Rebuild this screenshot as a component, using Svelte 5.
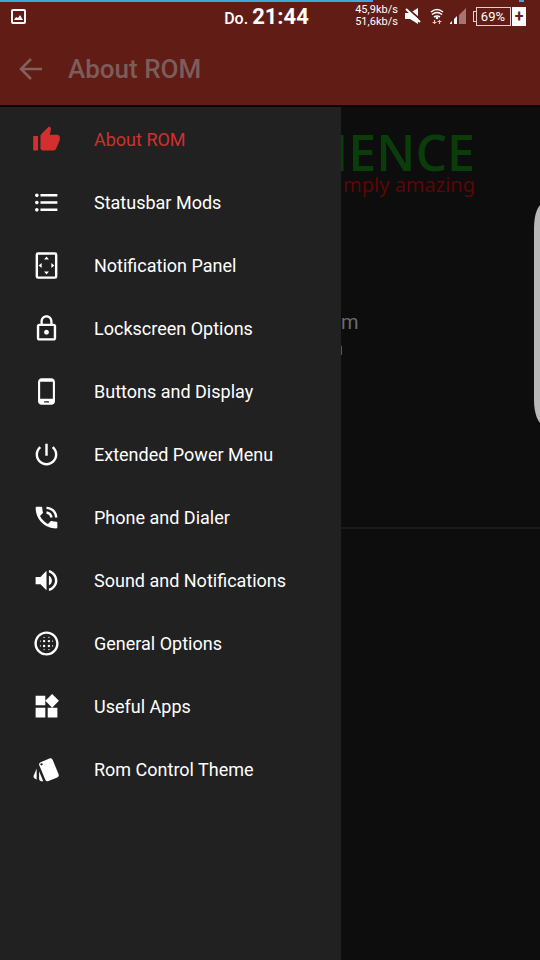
<script>
  let active = $state('about');

  // drawer entries, icons are drawn on a 24x24 grid
  const items = [
    { id: 'about', label: 'About ROM', icon: 'M1 21h4V9H1v12zm22-11c0-1.1-.9-2-2-2h-6.31l.95-4.57.03-.32c0-.41-.17-.79-.44-1.06L14.17 1 7.59 7.59C7.22 7.95 7 8.45 7 9v10c0 1.1.9 2 2 2h9c.83 0 1.54-.5 1.84-1.22l3.02-7.05c.09-.23.14-.47.14-.73v-2z' },
    { id: 'statusbar', label: 'Statusbar Mods', icon: 'M4 10.5c-.83 0-1.5.67-1.5 1.5s.67 1.5 1.5 1.5 1.5-.67 1.5-1.5-.67-1.5-1.5-1.5zm0-6c-.83 0-1.5.67-1.5 1.5S3.17 7.5 4 7.5 5.5 6.83 5.5 6 4.83 4.5 4 4.5zm0 12c-.83 0-1.5.68-1.5 1.5s.68 1.5 1.5 1.5 1.5-.68 1.5-1.5-.67-1.5-1.5-1.5zM7 19h14v-2H7v2zm0-6h14v-2H7v2zm0-8v2h14V5H7z' },
    { id: 'panel', label: 'Notification Panel', icon: 'M12 4.5 14 7h-4zM12 19.5 10 17h4zM5.5 12 8 10v4zM18.5 12 16 14v-4zM19 1H5a2 2 0 0 0-2 2v18a2 2 0 0 0 2 2h14a2 2 0 0 0 2-2V3a2 2 0 0 0-2-2zm0 20H5V3h14v18z' },
    { id: 'lockscreen', label: 'Lockscreen Options', icon: 'M12 17c1.1 0 2-.9 2-2s-.9-2-2-2-2 .9-2 2 .9 2 2 2zm6-9h-1V6c0-2.76-2.24-5-5-5S7 3.24 7 6v2H6c-1.1 0-2 .9-2 2v10c0 1.1.9 2 2 2h12c1.1 0 2-.9 2-2V10c0-1.1-.9-2-2-2zM8.9 6c0-1.71 1.39-3.1 3.1-3.1s3.1 1.39 3.1 3.1v2H8.9V6zM18 20H6V10h12v10z' },
    { id: 'display', label: 'Buttons and Display', icon: 'M16 1H8C6.34 1 5 2.34 5 4v16c0 1.66 1.34 3 3 3h8c1.66 0 3-1.34 3-3V4c0-1.66-1.34-3-3-3zm-2 20h-4v-1h4v1zm3.25-3H6.75V4h10.5v14z' },
    { id: 'power', label: 'Extended Power Menu', icon: 'M13 3h-2v10h2V3zm4.83 2.17l-1.42 1.42C17.99 7.86 19 9.81 19 12c0 3.87-3.13 7-7 7s-7-3.13-7-7c0-2.19 1.01-4.14 2.58-5.42L6.17 5.17C4.23 6.82 3 9.26 3 12c0 4.97 4.03 9 9 9s9-4.03 9-9c0-2.74-1.23-5.18-3.17-6.83z' },
    { id: 'phone', label: 'Phone and Dialer', icon: 'M20 15.5c-1.25 0-2.45-.2-3.57-.57-.35-.11-.74-.03-1.02.24l-2.2 2.2c-2.83-1.44-5.15-3.75-6.59-6.59l2.2-2.21c.28-.26.36-.65.25-1C8.7 6.45 8.5 5.25 8.5 4c0-.55-.45-1-1-1H4c-.55 0-1 .45-1 1 0 9.39 7.61 17 17 17 .55 0 1-.45 1-1v-3.5c0-.55-.45-1-1-1zM19 12h2c0-4.97-4.03-9-9-9v2c3.87 0 7 3.13 7 7zm-4 0h2c0-2.76-2.24-5-5-5v2c1.66 0 3 1.34 3 3z' },
    { id: 'sound', label: 'Sound and Notifications', icon: 'M3 9v6h4l5 5V4L7 9H3zm13.5 3c0-1.77-1.02-3.29-2.5-4.03v8.05c1.48-.73 2.5-2.25 2.5-4.02zM14 3.23v2.06c2.89.86 5 3.54 5 6.71s-2.11 5.85-5 6.71v2.06c4.01-.91 7-4.49 7-8.77s-2.99-7.86-7-8.77z' },
    { id: 'general', label: 'General Options', icon: 'M12 2C6.48 2 2 6.48 2 12s4.48 10 10 10 10-4.48 10-10S17.52 2 12 2zm0 18c-4.42 0-8-3.58-8-8s3.58-8 8-8 8 3.58 8 8-3.58 8-8 8z' },
    { id: 'apps', label: 'Useful Apps', icon: 'M13 13v8h8v-8h-8zM3 21h8v-8H3v8zM3 3v8h8V3H3zm13.66-1.31L11 7.34 16.66 13l5.66-5.66-5.66-5.65z' },
    { id: 'theme', label: 'Rom Control Theme', icon: 'M2.53 19.65l1.34.56v-9.03l-2.43 5.86c-.41 1.02.08 2.19 1.09 2.61zm19.5-3.7L17.07 3.98c-.31-.75-1.04-1.21-1.81-1.23-.26 0-.53.04-.79.15L7.1 5.95c-.75.31-1.21 1.03-1.23 1.8-.01.27.04.54.15.8l4.96 11.97c.31.76 1.05 1.22 1.83 1.23.26 0 .52-.05.77-.15l7.36-3.05c1.02-.42 1.51-1.59 1.09-2.6zM7.88 8.75c-.55 0-1-.45-1-1s.45-1 1-1 1 .45 1 1-.45 1-1 1zm-2 11c0 1.1.9 2 2 2h1.45l-3.45-8.34v6.34z' }
  ];

  // dot pattern of the General Options icon: [x, y, r]
  const dots = [
    [10, 10, 1], [14, 10, 1], [10, 14, 1], [14, 14, 1],
    [7, 10, 0.5], [7, 14, 0.5], [17, 10, 0.5], [17, 14, 0.5],
    [10, 7, 0.5], [14, 7, 0.5], [10, 17, 0.5], [14, 17, 0.5]
  ];
</script>

<div class="screen">
  <header>
    <div class="traffic-line"></div>
    <div class="traffic-dot"></div>
    <div class="status-bar">
      <div class="status-left">
        <svg width="15" height="15" viewBox="0 0 15 15" fill="none">
          <rect x="1" y="1" width="13" height="13" rx="1" stroke="#fff" stroke-width="2" />
          <path d="M3 11l2-3 2 1 2-3 3 5z" fill="#fff" />
        </svg>
      </div>
      <div class="clock"><span class="day">Do.</span> <span class="time">21:44</span></div>
      <div class="status-right">
        <div class="speed">
          <span>45,9kb/s</span>
          <span>51,6kb/s</span>
        </div>
        <svg class="mute" width="16" height="16" viewBox="0 0 16 16">
          <path d="M0 5h5l8-5v16l-8-5H0z" fill="#fff" />
          <path d="M2 0l14 12" stroke="#611c16" stroke-width="2" />
          <path d="M1 1l14 13" stroke="#fff" stroke-width="2" />
        </svg>
        <svg class="wifi" width="14" height="17" viewBox="0 0 14 17" fill="none" stroke="#fff" stroke-width="1.6">
          <path d="M1 4q6-5 12 0M2 6.5q5-4 10 0M4 9q3-2 6 0" />
          <circle cx="7" cy="10" r="1.3" fill="#fff" stroke="none" />
          <path d="M4.5 12v4M9.5 12v4M2.5 14.500h4M7.500 13.500h4" stroke="#f0c4bf" stroke-width="1.2" />
        </svg>
        <svg class="signal" width="16" height="16" viewBox="0 0 16 16">
          <path d="M9 7l2-2v11H9zM11 5l5-5v16h-5z" fill="#a67571" />
          <path d="M0 16v-1l2-2v3zM4 16v-5l3-3v8z" fill="#fff" />
        </svg>
        <div class="battery">
          <span class="tip"></span>
          <span class="level">69%</span>
          <span class="plus">+</span>
        </div>
      </div>
    </div>
    <div class="toolbar">
      <button class="back" aria-label="Back">
        <svg width="24" height="22" viewBox="0 0 24 22" fill="none" stroke="#85615e" stroke-width="2.5">
          <path d="M12 1L2 11l10 10M2 11h21" />
        </svg>
      </button>
      <h1>About ROM</h1>
    </div>
  </header>

  <div class="body">
    <nav>
      {#each items as item}
        <a href="#{item.id}" class:active={active === item.id} onclick={() => (active = item.id)}>
          <svg width="29" height="29" viewBox="0 0 24 24" fill="currentColor">
            <path d={item.icon} />
            {#if item.id === 'general'}
              {#each dots as [x, y, r]}
                <circle cx={x} cy={y} {r} />
              {/each}
            {/if}
          </svg>
          <span>{item.label}</span>
        </a>
      {/each}
    </nav>

    <main>
      <div class="logo">
        <div class="brand">IENCE</div>
        <div class="slogan">mply amazing</div>
      </div>
      <div class="info">
        <p>m</p>
        <p class="small">n</p>
      </div>
    </main>
  </div>

  <div class="edge-panel"></div>
</div>

<style>
  :global(body) {
    margin: 0;
    background: #0d0d0d;
  }
  .screen {
    position: relative;
    display: flex;
    flex-direction: column;
    min-height: 100vh;
    overflow: hidden;
    font-family: Roboto, sans-serif;
    color: #fff;
  }
  header {
    position: relative;
    height: 105px;
    background: #611c16;
    border-bottom: 2px solid #090505;
  }
  .traffic-line,
  .traffic-dot {
    position: absolute;
    top: 0;
    height: 2px;
    background: #42a5dc;
  }
  .traffic-line {
    left: 0;
    width: 69%;
  }
  .traffic-dot {
    right: 16px;
    width: 5px;
  }
  .status-bar {
    display: grid;
    grid-template-columns: 1fr auto 1fr;
    align-items: center;
    height: 32px;
    padding: 0 14px 0 11px;
  }
  .status-left {
    display: flex;
  }
  .clock {
    padding-right: 4px;
    white-space: nowrap;
    font-weight: 500;
  }
  .day {
    font-size: 16px;
  }
  .time {
    font-size: 22px;
    font-weight: 700;
  }
  .status-right {
    display: flex;
    align-items: center;
    justify-content: flex-end;
  }
  .speed {
    display: flex;
    flex-direction: column;
    font-size: 11px;
    line-height: 12px;
  }
  .mute {
    margin-left: 7px;
  }
  .wifi {
    margin-left: 9px;
  }
  .signal {
    margin-left: 6px;
  }
  .battery {
    display: flex;
    align-items: center;
    height: 19px;
    margin-left: 7px;
    font-size: 13px;
    line-height: 17px;
  }
  .tip {
    width: 2px;
    height: 9px;
    border: 1px solid #e8cdca;
    border-right: 0;
  }
  .level {
    padding: 0 5px 0 4px;
    border: 1px solid #e8cdca;
  }
  .plus {
    width: 14px;
    line-height: 19px;
    margin-left: 1px;
    background: #fff;
    color: #611c16;
    font-size: 16px;
    font-weight: 700;
    text-align: center;
  }
  .toolbar {
    display: flex;
    align-items: center;
    gap: 25px;
    height: 73px;
    padding-left: 19px;
  }
  .back {
    display: flex;
    padding: 0;
    border: 0;
    background: none;
    cursor: pointer;
  }
  h1 {
    margin: 0;
    font-size: 26px;
    font-weight: 500;
    color: #7d5d5a;
  }
  .body {
    display: flex;
    flex: 1;
  }
  nav {
    flex: 0 0 341px;
    padding-top: 1px;
    background: #212121;
  }
  nav a {
    display: flex;
    align-items: center;
    gap: 33px;
    height: 63px;
    padding-left: 32px;
    color: #fff;
    font-size: 18px;
    text-decoration: none;
  }
  nav a.active {
    color: #d32f2f;
  }
  main {
    flex: 1;
    min-width: 0;
    overflow: hidden;
    background: #0d0d0d;
  }
  .logo {
    display: flex;
    flex-direction: column;
    align-items: flex-end;
    width: 134px;
    padding-top: 22px;
    white-space: nowrap;
  }
  .brand {
    color: #0b3d0b;
    font-family: "Open Sans", sans-serif;
    font-size: 50px;
    font-weight: 600;
    line-height: 46px;
  }
  .slogan {
    color: #5c0606;
    font-family: "Noto Sans", sans-serif;
    font-size: 20px;
    line-height: 20px;
  }
  .info {
    height: 332px;
    border-bottom: 2px solid #1a1a1a;
    color: #6b6b6b;
    font-size: 20px;
  }
  .info p {
    margin: 0;
    padding-top: 114px;
    line-height: 26px;
  }
  .info .small {
    padding-top: 0;
    width: 2px;
    direction: rtl;
    overflow: hidden;
  }
  .edge-panel {
    position: absolute;
    top: 204px;
    right: -12px;
    width: 18px;
    height: 220px;
    border-radius: 12px / 32px;
    background: #b9b9b9;
  }
</style>
